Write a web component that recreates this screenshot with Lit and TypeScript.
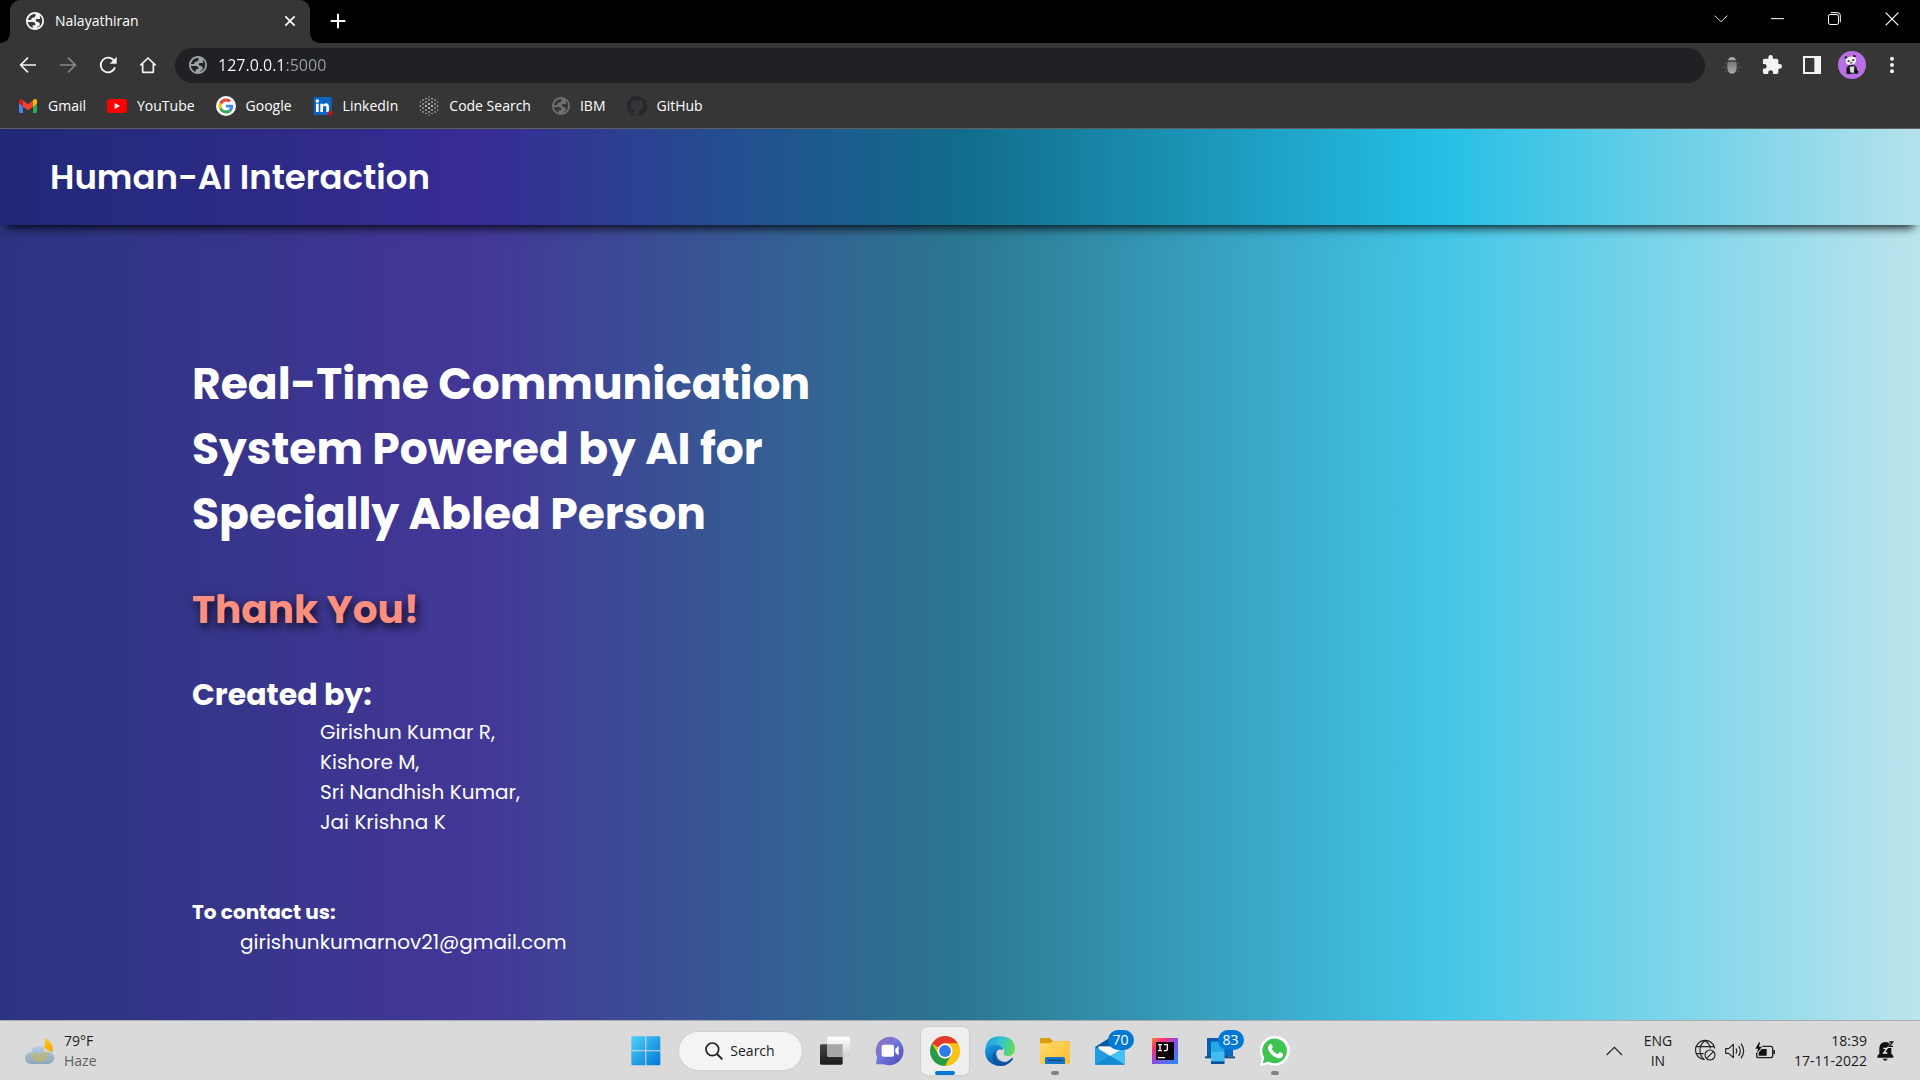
import { LitElement, html, svg, css, TemplateResult } from "lit";
import { customElement, property } from "lit/decorators.js";

/* Each icon is drawn at three units per pixel. */
const icon = (w: number, h: number, body: unknown) =>
  html`<svg width=${w} height=${h} viewBox="0 0 ${w * 3} ${h * 3}" aria-hidden="true">${body}</svg>`;

const globe = (color: string, size = 18) =>
  html`<svg width=${size} height=${size} viewBox="2 2 20 20" aria-hidden="true">
    <path fill=${color} d="M12 2C6.48 2 2 6.48 2 12s4.480 10 10 10 10-4.480 10-10S17.520 2 12 2zM4.100 13.200h5.100c1.600 0 2.800.6 3.200 2 .3 1-.4 1.500-1.600 1.500h-1.300v3.100C6.600 18.900 4.400 16.400 4.100 13.200zM14.500 19.600v-1.200c1.800-.2 2.900-1.300 2.900-2.800 0-1.600-1.200-2.700-3-2.900-1.300-.2-1.800-.9-1.500-1.800.2-.7.9-1.100 1.800-1.100h1.500c1.200 0 1.700-.7 1.400-1.800l-.3-1.700C19.400 7.700 20.200 10 20 12.600c-.3 3.300-2.500 6-5.500 7zM12.500 4.100v1.700c0 1.200-.8 2-2.200 2.200-1.600.2-2.500 1-2.500 2.100v.9H4.200C4.800 7 8.200 4 12.500 4.100z"/>
  </svg>`;

const icons = {
  close: icon(12, 12, svg`<path d="M4 4L32 32M32 4L4 32" stroke="#fff" stroke-width="5"/>`),
  plus: icon(16, 16, svg`<path d="M24 2V46M2 24H46" stroke="#fff" stroke-width="6"/>`),
  chevronDown: icon(14, 8, svg`<path d="M2 2L21 20L40 2" fill="none" stroke="#ddd" stroke-width="3"/>`),
  minimise: icon(13, 13, svg`<path d="M0 20H39" stroke="#fff" stroke-width="3"/>`),
  restore: icon(13, 13, svg`<rect x="1.500" y="7.500" width="30" height="30" rx="5" fill="none" stroke="#fff" stroke-width="3"/><path d="M8 2H29Q37 2 37 10V31" fill="none" stroke="#fff" stroke-width="3"/>`),
  closeWindow: icon(14, 14, svg`<path d="M2 2L40 40M40 2L2 40" stroke="#fff" stroke-width="3.500"/>`),
  back: icon(18, 18, svg`<path d="M51 27H6M27 5L5 27L27 49" fill="none" stroke="#f1f3f4" stroke-width="5"/>`),
  forward: icon(18, 18, svg`<path d="M3 27H48M27 5L49 27L27 49" fill="none" stroke="#868686" stroke-width="5"/>`),
  reload: icon(18, 18, svg`<path d="M45 14A22 22 0 1 0 48 34" fill="none" stroke="#f1f3f4" stroke-width="5.500"/><path d="M53 2V23H32Z" fill="#f1f3f4"/>`),
  home: icon(18, 18, svg`<path d="M4 28L27 6L50 28M11 24V49H43V24" fill="none" stroke="#f1f3f4" stroke-width="5" stroke-linejoin="round"/>`),
  bug: icon(18, 18, svg`<defs><linearGradient id="b" x2="0" y2="1"><stop stop-color="#777"/><stop offset="1" stop-color="#aaa"/></linearGradient></defs><path d="M15 13Q18 3 27 3T39 13Z" fill="#aaa"/><path d="M13 17H41V34Q41 53 27 53T13 34Z" fill="url(#b)"/><path d="M11 24L4 21M10 34H1M12 44L5 49M43 24L50 21M44 34H53M42 44L49 49" stroke="#555" stroke-width="3"/>`),
  puzzle: html`<svg width="20" height="20" viewBox="1 1 22 22" aria-hidden="true"><path fill="#f1f3f4" d="M20.500 11H19V7c0-1.100-.9-2-2-2h-4V3.500a2.500 2.500 0 0 0-5 0V5H4c-1.100 0-2 .9-2 2v3.800h1.500a2.700 2.700 0 0 1 0 5.400H2V20c0 1.100.9 2 2 2h3.800v-1.500a2.700 2.700 0 0 1 5.400 0V22H17c1.100 0 2-.9 2-2v-4h1.500a2.500 2.500 0 0 0 0-5z"/></svg>`,
  panel: icon(18, 18, svg`<rect x="3" y="3" width="48" height="48" fill="none" stroke="#f1f3f4" stroke-width="6"/><path d="M34 3H51V51H34Z" fill="#f1f3f4"/>`),
  avatar: icon(28, 28, svg`<circle cx="42" cy="42" r="42" fill="#b76fe3"/><ellipse cx="41" cy="55" rx="16" ry="14" fill="#1c1a20"/><path d="M35 47L49 46L48 65H37Z" fill="#ddd8e4"/><circle cx="31" cy="64" r="6" fill="#111"/><circle cx="55" cy="63" r="6" fill="#111"/><circle cx="24" cy="20" r="4" fill="#17151a"/><circle cx="49" cy="16" r="4" fill="#17151a"/><path d="M22 24Q34 13 51 18Q58 29 51 37Q38 45 26 39Z" fill="#f1eff3"/><path d="M29 32L35 29M42 28L49 26" stroke="#17151a" stroke-width="4"/><path d="M36 36L43 35" stroke="#17151a" stroke-width="3"/>`),
  menu: icon(6, 18, svg`<circle cx="9" cy="8" r="6" fill="#f1f3f4"/><circle cx="9" cy="27" r="6" fill="#f1f3f4"/><circle cx="9" cy="46" r="6" fill="#f1f3f4"/>`),
  gmail: icon(20, 20, svg`<path d="M3 21V47Q3 51 7 51H15V28Z" fill="#4285f4"/><path d="M57 21V47Q57 51 53 51H45V28Z" fill="#34a853"/><path d="M45 13L50 10Q57 7 57 16V22L45 32Z" fill="#fbbc04"/><path d="M3 22V16Q3 7 10 10L15 13V32Z" fill="#c5221f"/><path d="M15 13L30 25L45 13V32L30 43L15 32Z" fill="#ea4335"/>`),
  youtube: icon(20, 20, svg`<rect y="9" width="60" height="42" rx="10" fill="#f00"/><path d="M23 21L39 30L23 39Z" fill="#fff"/>`),
  google: html`<svg width="20" height="20" viewBox="-8 -8 64 64" aria-hidden="true"><circle cx="24" cy="24" r="32" fill="#fff"/><path fill="#EA4335" d="M24 9.500c3.540 0 6.710 1.220 9.210 3.600l6.850-6.850C35.900 2.380 30.470 0 24 0 14.620 0 6.510 5.380 2.560 13.220l7.980 6.190C12.430 13.720 17.740 9.500 24 9.500z"/><path fill="#4285F4" d="M46.980 24.550c0-1.570-.15-3.090-.38-4.550H24v9.020h12.940c-.58 2.960-2.260 5.480-4.780 7.180l7.730 6c4.510-4.180 7.090-10.360 7.090-17.650z"/><path fill="#FBBC05" d="M10.530 28.590c-.48-1.450-.76-2.990-.76-4.590s.27-3.140.76-4.590l-7.980-6.190C.92 16.460 0 20.120 0 24c0 3.880.92 7.540 2.560 10.780l7.970-6.190z"/><path fill="#34A853" d="M24 48c6.480 0 11.930-2.130 15.890-5.810l-7.730-6c-2.150 1.450-4.920 2.300-8.160 2.300-6.260 0-11.570-4.220-13.470-9.910l-7.980 6.190C6.510 42.620 14.620 48 24 48z"/></svg>`,
  linkedin: icon(20, 20, svg`<rect x="2" y="3" width="54" height="54" rx="4" fill="#0a66c2"/><rect x="9" y="23" width="8" height="25" fill="#fff"/><circle cx="13" cy="15" r="5" fill="#fff"/><path d="M22 23H30V27Q33 22 39 22Q48 22 48 34V48H40V35Q40 29 35 29T30 35V48H22Z" fill="#fff"/><circle cx="51" cy="52" r="7" fill="#cc1016"/>`),
  codeSearch: icon(20, 20, svg`${[
    [4, [18, 30, 42]], [12, [12, 24, 36, 48]], [21, [8, 18, 30, 42, 52]], [30, [3, 12, 24, 36, 48, 57]],
    [39, [8, 18, 30, 42, 52]], [48, [12, 24, 36, 48]], [56, [18, 30, 42]],
  ].map(([x, ys]) => (ys as number[]).map((y) => svg`<circle cx=${x as number} cy=${y} r=${3.1 - Math.hypot((x as number) - 30, y - 30) / 22} fill="#f0f0f0"/>`))}`),
  github: html`<svg width="20" height="20" viewBox="0 0 16 16" aria-hidden="true"><path fill="#24292f" d="M8 0C3.580 0 0 3.580 0 8c0 3.540 2.290 6.530 5.470 7.590.4.07.55-.17.55-.38 0-.19-.01-.82-.01-1.490-2.010.37-2.530-.49-2.690-.94-.09-.23-.48-.94-.82-1.130-.28-.15-.68-.52-.01-.53.63-.01 1.080.58 1.230.82.72 1.210 1.870.87 2.330.66.07-.52.28-.87.51-1.070-1.780-.2-3.640-.89-3.640-3.950 0-.87.31-1.590.82-2.150-.08-.2-.36-1.020.08-2.120 0 0 .67-.21 2.200.82.64-.18 1.320-.27 2-.27s1.360.09 2 .27c1.530-1.040 2.200-.82 2.200-.82.44 1.100.16 1.920.08 2.120.51.56.82 1.270.82 2.150 0 3.070-1.870 3.750-3.650 3.950.29.25.54.73.54 1.480 0 1.070-.01 1.930-.01 2.200 0 .21.15.46.55.38A8.010 8.010 0 0 0 16 8c0-4.420-3.580-8-8-8z"/></svg>`,

  weather: icon(30, 30, svg`<defs><linearGradient id="mo" x2="0" y2="1"><stop stop-color="#ffc928"/><stop offset="1" stop-color="#f5a800"/></linearGradient><linearGradient id="cl" x2="0" y2="1"><stop stop-color="#b9cde2"/><stop offset="1" stop-color="#8ba6bd"/></linearGradient></defs><path d="M59 6Q89 15 87 48Q72 46 60 34Q67 20 59 6Z" fill="url(#mo)"/><path d="M20 84A18 18 0 0 1 22 48Q25 30 43 30T62 47H72A18.500 18.500 0 0 1 72 84Z" fill="url(#cl)"/><path d="M17 58Q30 44 47 55Q60 42 75 52Q72 78 47 79Q26 78 17 58Z" fill="#c5b568" opacity=".65"/>`),
  start: icon(30, 30, svg`<defs><linearGradient id="w" x2="1" y2="1"><stop stop-color="#4ed0fc"/><stop offset="1" stop-color="#0078d4"/></linearGradient></defs><path d="M4 1H43V43H1V4Q1 1 4 1ZM46 1H85Q88 1 88 4V43H46ZM1 46H43V88H4Q1 88 1 85ZM46 46H88V85Q88 88 85 88H46Z" fill="url(#w)"/>`),
  search: icon(18, 18, svg`<circle cx="22" cy="22" r="19" fill="none" stroke="#222" stroke-width="5"/><path d="M36 36L52 52" stroke="#222" stroke-width="6"/>`),
  taskView: icon(30, 30, svg`<defs><linearGradient id="t" x2="0" y2="1"><stop stop-color="#444"/><stop offset="1" stop-color="#1c1c1c"/></linearGradient><linearGradient id="tw" x2="0" y2="1"><stop stop-color="#fff"/><stop offset="1" stop-color="#cfcfcf"/></linearGradient></defs><rect y="25" width="68" height="61" rx="4" fill="url(#t)"/><rect x="22" y="2" width="68" height="61" rx="4" fill="url(#tw)"/><path d="M22 25H68V63H26Q22 63 22 59Z" fill="#a7a7a7"/>`),
  chat: icon(30, 30, svg`<defs><linearGradient id="c" x2="1" y2="1"><stop stop-color="#9a72b5"/><stop offset=".45" stop-color="#7078d8"/><stop offset="1" stop-color="#4c45b8"/></linearGradient></defs><path d="M45 2A43 43 0 1 1 27 85H3L6 63A43 43 0 0 1 45 2Z" fill="url(#c)"/><rect x="20" y="26" width="37" height="36" rx="6" fill="#fff"/><path d="M61 38L71 30V58L61 50Z" fill="#fff"/>`),
  chrome: html`<svg width="30" height="30" viewBox="0 0 48 48" aria-hidden="true"><circle cx="24" cy="24" r="24" fill="#fbc116"/><path fill="#e33b2e" d="M3.220 12A24 24 0 0 1 44.780 12H24A12 12 0 0 0 13.600 18z"/><path fill="#269b4a" d="M3.220 12A24 24 0 0 0 24 48L34.400 30A12 12 0 0 1 13.600 30z"/><path fill="#e33b2e" d="M3.220 12L13.600 18L20 14z"/><path fill="#fbc116" d="M44.780 12H24L34.400 30L24 48A24 24 0 0 0 44.780 12z"/><circle cx="24" cy="24" r="12" fill="#fff"/><circle cx="24" cy="24" r="9.500" fill="#2f7ae9"/></svg>`,
  edge: icon(30, 30, svg`<defs><linearGradient id="e" y1=".3" x2="1" y2=".5"><stop stop-color="#1fa0dc"/><stop offset=".5" stop-color="#35c3d3"/><stop offset="1" stop-color="#62de55"/></linearGradient><linearGradient id="e2" x2=".4" y2="1"><stop stop-color="#1b9de2"/><stop offset="1" stop-color="#0b5cae"/></linearGradient></defs><path d="M1 40Q5 1 45 1Q87 1 90 38Q88 60 68 60Q52 60 57 49Q61 40 50 35Q26 24 1 47Z" fill="url(#e)"/><path d="M0 48Q3 26 28 26Q49 26 55 42Q34 36 34 55Q38 80 66 78Q55 92 36 89Q2 82 0 48Z" fill="url(#e2)"/><path d="M35 43Q23 60 36 75Q54 91 80 67Q84 64 85 68Q69 91 45 90Q20 85 23 61Q25 49 35 43Z" fill="#10509a"/>`),
  explorer: icon(30, 30, svg`<defs><linearGradient id="f" x2="1" y2="1"><stop stop-color="#ffdb6b"/><stop offset="1" stop-color="#fbbd2e"/></linearGradient></defs><path d="M0 9Q0 6 3 6H29L39 15H87Q90 15 90 19V40H0Z" fill="#dd9d0a"/><path d="M0 22H30L39 16H90V83H0Z" fill="url(#f)"/><path d="M15 84V68Q15 63 20 63H70Q75 63 75 68V84Z" fill="#1475c4"/><path d="M24 73H67" stroke="#0b4685" stroke-width="4"/>`),
  mail: icon(30, 30, svg`<path d="M0 33L44 5L90 33V50H0Z" fill="#09589f"/><path d="M10 31H80V60H10Z" fill="#f4f4f4"/><path d="M0 32L90 86H0Z" fill="#1f9be0"/><path d="M90 33V86L46 59Z" fill="#41c4f3"/><path d="M0 86L46 59L90 86Z" fill="#1489d2"/>`),
  intellij: icon(26, 26, svg`<defs><linearGradient id="ij" x2="1" y2="1"><stop stop-color="#f58a2d"/><stop offset=".25" stop-color="#fb2a7b"/><stop offset=".5" stop-color="#8d4be5"/><stop offset="1" stop-color="#1792fb"/></linearGradient></defs><rect width="78" height="78" fill="url(#ij)"/><rect x="12" y="12" width="54" height="54" fill="#0c0008"/><path d="M18 20H30M24 20V38M18 38H30M36 20H46V33Q46 39 36 38M18 59H39" fill="none" stroke="#fff" stroke-width="4"/>`),
  phone: icon(30, 30, svg`<path d="M6 6H70V65H6Z" fill="#0b5db0"/><path d="M36 12H84V61H36Z" fill="#0b69bf"/><path d="M0 61H90V67H0Z" fill="#174f85"/><rect x="18" y="17" width="40" height="67" fill="#23a8e6"/><path d="M18 47H58V84H18Z" fill="#43bdf0"/><path d="M18 76H58V84H18Z" fill="#0a5199"/>`),
  whatsapp: icon(30, 30, svg`<path d="M0 90L6 67A45 45 0 1 1 24 84Z" fill="#fff"/><path d="M8 82L13 65A37 37 0 1 1 26 77Z" fill="#3fc351"/><path d="M32 24Q35 23 38 31Q39 34 35 39Q42 51 53 55L58 49Q60 47 64 50Q70 53 69 56Q68 67 56 67Q38 64 27 46Q19 30 32 24Z" fill="#fff"/>`),
  chevronUp: icon(17, 10, svg`<path d="M2 27L25 4L48 27" fill="none" stroke="#222" stroke-width="3.500"/>`),
  network: icon(21, 21, svg`<g fill="none" stroke="#222" stroke-width="3.500"><path d="M59 25A29 29 0 1 0 29 59M30 2Q15 12 15 31T28 59M30 2Q44 10 46 25M4 20H56M4 41H26"/><circle cx="45" cy="45" r="15"/><path d="M35 55L55 35"/></g>`),
  sound: icon(21, 18, svg`<g fill="none" stroke="#222" stroke-width="3.500" stroke-linejoin="round"><path d="M2 20V34H11L25 47V7L11 20Z"/><path d="M33 19Q38 27 33 35M41 12Q51 27 41 42"/><path d="M48 5Q64 27 48 49" /></g>`),
  battery: icon(21, 18, svg`<path d="M22 13H47Q53 13 53 19V41Q53 47 47 47H11Q5 47 5 41V32" fill="none" stroke="#222" stroke-width="4"/><path d="M55 24H60V37H55Z" fill="#222"/><path d="M13 29L20 21H35V41H11V34Z" fill="#111"/><path d="M12 1L1 20H9L6 34L21 14H12L15 1Z" fill="#111"/>`),
  bell: icon(18, 21, svg`<path d="M1 53V47L7 41V24Q8 7 25 6Q37 7 43 17V41L49 47V53Z" fill="#111"/><path d="M17 56H32Q30 62 25 62T17 56Z" fill="#111"/><path d="M36 6H48L37 20H49" fill="none" stroke="#dadada" stroke-width="8"/><path d="M19 25H30L20 39H31" fill="none" stroke="#f0f0f0" stroke-width="4"/><path d="M37 6H47L37 19H48" fill="none" stroke="#111" stroke-width="4"/>`),
};

const resets = css`
  * { box-sizing: border-box; }
  button { border: 0; padding: 0; margin: 0; background: none; font: inherit; color: inherit; display: flex; align-items: center; justify-content: center; }
  a { color: inherit; text-decoration: none; }
  svg { display: block; flex: none; overflow: visible; }
`;

@customElement("browser-chrome")
class BrowserChrome extends LitElement {
  static styles = [resets, css`
    :host { display: block; background: #363636; color: #fff; font: 14px/20px "Segoe UI", "Open Sans", sans-serif; border-bottom: 1px solid #62605f; }
    .tabs { display: flex; background: #000; height: 43px; padding-left: 10px; }
    .tab { position: relative; display: flex; align-items: center; width: 300px; padding: 0 14px 2px 16px; background: #363636; border-radius: 10px 10px 0 0; gap: 11px; }
    .tab::before, .tab::after { content: ""; position: absolute; bottom: 0; width: 10px; height: 10px; }
    .tab::before { left: -10px; background: radial-gradient(circle at 0 0, transparent 10px, #363636 10px); }
    .tab::after { right: -10px; background: radial-gradient(circle at 100% 0, transparent 10px, #363636 10px); }
    .tab-title { flex: 1; }
    .new-tab { width: 55px; height: 42px; }
    .window-controls { display: flex; margin-left: auto; }
    .window-controls button { width: 57px; height: 37px; }
    .toolbar { display: flex; align-items: center; height: 44px; padding: 0 8px; }
    .tool { width: 40px; height: 36px; }
    .address { display: flex; align-items: center; flex: 1; height: 35px; margin: 0 7px; padding: 0 14px; gap: 11px; border-radius: 18px; background: #202124; }
    .address input { flex: 1; min-width: 0; border: 0; padding: 0; outline: 0; font: 16px/24px "Segoe UI", "Open Sans", sans-serif; color: transparent; background: linear-gradient(to right, #fff 67px, #9aa0a6 67px); -webkit-background-clip: text; background-clip: text; }
    .bookmarks { display: flex; align-items: center; height: 41px; padding: 0 18px 3px; gap: 21px; }
    .bookmark { display: flex; align-items: center; gap: 10px; }
  `];

  private tool(label: string, glyph: TemplateResult) {
    return html`<button class="tool" aria-label=${label}>${glyph}</button>`;
  }

  render() {
    const bookmarks: [string, TemplateResult][] = [
      ["Gmail", icons.gmail], ["YouTube", icons.youtube], ["Google", icons.google], ["LinkedIn", icons.linkedin],
      ["Code Search", icons.codeSearch], ["IBM", globe("#6b6f73")], ["GitHub", icons.github],
    ];
    return html`
      <div class="tabs">
        <div class="tab">${globe("#f1f3f4")}<span class="tab-title">Nalayathiran</span><button aria-label="Close tab">${icons.close}</button></div>
        <button class="new-tab" aria-label="New tab">${icons.plus}</button>
        <div class="window-controls">
          <button aria-label="Search tabs">${icons.chevronDown}</button>
          <button aria-label="Minimise">${icons.minimise}</button>
          <button aria-label="Restore">${icons.restore}</button>
          <button aria-label="Close">${icons.closeWindow}</button>
        </div>
      </div>
      <div class="toolbar">
        ${this.tool("Back", icons.back)}${this.tool("Forward", icons.forward)}${this.tool("Reload", icons.reload)}${this.tool("Home", icons.home)}
        <label class="address">${globe("#9aa0a6")}<input type="text" aria-label="Address" .value=${"127.0.0.1:5000"} /></label>
        ${this.tool("Debugger extension", icons.bug)}${this.tool("Extensions", icons.puzzle)}${this.tool("Side panel", icons.panel)}${this.tool("Profile", icons.avatar)}${this.tool("Menu", icons.menu)}
      </div>
      <nav class="bookmarks">
        ${bookmarks.map(([name, glyph]) => html`<a class="bookmark" href="#">${glyph}${name}</a>`)}
      </nav>`;
  }
}

@customElement("project-page")
class ProjectPage extends LitElement {
  static styles = [resets, css`
    :host { display: flex; flex-direction: column; flex: 1; color: #fff; font: 20px/30px Poppins, Inter, sans-serif;
      background: linear-gradient(to right, #2c3480, #433797 25%, #2b7791 50%, #43c6e7 75%, #bce5ed); }
    header { padding: 24px 50px; background: linear-gradient(to right, #212977, #372c94 25%, #126c8b 50%, #25bfe5 75%, #b5e2eb); box-shadow: 0 8px 10px -6px #000; }
    .brand { font-size: 34px; line-height: 48px; font-weight: 600; margin: 0; }
    main { padding: 126px 10% 60px; }
    h1, h2, h3, p, ul { margin: 0; padding: 0; list-style: none; }
    h1 { font-size: 44px; line-height: 65px; max-width: 704px; }
    .thanks { margin-top: 34px; font-size: 39px; line-height: 60px; color: #fa8f80; text-shadow: 2px 4px 10px rgba(0, 0, 0, 0.8); }
    .created { margin-top: 32px; font-size: 30px; line-height: 45px; }
    .names { padding-left: 128px; }
    .contact { margin-top: 60px; font-size: 20px; line-height: 30px; }
    .mail { padding-left: 48px; }
  `];

  render() {
    const names = ["Girishun Kumar R,", "Kishore M,", "Sri Nandhish Kumar,", "Jai Krishna K"];
    return html`
      <header><p class="brand">Human-AI Interaction</p></header>
      <main>
        <h1>Real-Time Communication System Powered by AI for Specially Abled Person</h1>
        <h2 class="thanks">Thank You!</h2>
        <h2 class="created">Created by:</h2>
        <ul class="names">${names.map((n) => html`<li>${n}</li>`)}</ul>
        <h3 class="contact">To contact us:</h3>
        <p class="mail"><a href="mailto:girishunkumarnov21@gmail.com">girishunkumarnov21@gmail.com</a></p>
      </main>`;
  }
}

@customElement("task-button")
class TaskButton extends LitElement {
  @property() label = "";
  @property() badge = "";
  @property() mark = "";
  @property({ attribute: false }) glyph?: TemplateResult;

  static styles = [resets, css`
    button { position: relative; width: 48px; height: 48px; border-radius: 6px; }
    .active { background: #eeeeee; box-shadow: 0 0 2px #b5b5b5; }
    .badge { position: absolute; left: 22px; top: 3px; min-width: 26px; height: 20px; padding: 0 5px; border-radius: 10px; background: #0078d4; color: #fff; font: 14px/20px "Segoe UI", "Open Sans", sans-serif; }
    .mark { position: absolute; bottom: 0; width: 8px; height: 4px; border-radius: 2px; background: #828282; }
    .active .mark { width: 20px; background: #0078d4; }
  `];

  render() {
    return html`<button class=${this.mark === "active" ? "active" : "idle"} aria-label=${this.label}>
      ${this.glyph}
      ${this.badge ? html`<span class="badge">${this.badge}</span>` : ""}
      ${this.mark ? html`<span class="mark"></span>` : ""}
    </button>`;
  }
}

@customElement("task-bar")
class TaskBar extends LitElement {
  static styles = [resets, css`
    :host { display: grid; grid-template-columns: 1fr auto 1fr; align-items: center; height: 59px; background: #dadada; border-top: 1px solid #a9adb2; color: #1b1b1b; font: 14px/20px "Segoe UI", "Open Sans", sans-serif; }
    .weather { justify-self: start; margin-left: 24px; gap: 10px; text-align: left; }
    .haze { color: #606060; }
    .apps { display: flex; align-items: center; gap: 7px; }
    .search { width: 123px; height: 38px; margin: 0 2px; gap: 7px; border-radius: 19px; background: #f4f4f4; box-shadow: 0 0 2px #bbb; }
    .tray { display: flex; align-items: center; justify-self: end; padding-right: 25px; }
    .language { margin-left: 19px; width: 32px; }
    .status { margin-left: 21px; gap: 9px; }
    .clock { margin-left: 18px; gap: 10px; text-align: right; }
  `];

  render() {
    const apps: [string, TemplateResult, string, string][] = [
      ["Task view", icons.taskView, "", ""], ["Chat", icons.chat, "", ""], ["Chrome", icons.chrome, "", "active"],
      ["Edge", icons.edge, "", ""], ["File Explorer", icons.explorer, "", "open"], ["Mail", icons.mail, "70", ""],
      ["IntelliJ IDEA", icons.intellij, "", ""], ["Phone Link", icons.phone, "83", ""], ["WhatsApp", icons.whatsapp, "", "open"],
    ];
    return html`
      <button class="weather">${icons.weather}<span>79°F<br /><span class="haze">Haze</span></span></button>
      <nav class="apps">
        <task-button label="Start" .glyph=${icons.start}></task-button>
        <button class="search">${icons.search}Search</button>
        ${apps.map(([label, glyph, badge, mark]) => html`<task-button .label=${label} .glyph=${glyph} .badge=${badge} .mark=${mark}></task-button>`)}
      </nav>
      <div class="tray">
        <button aria-label="Hidden icons">${icons.chevronUp}</button>
        <button class="language">ENG<br />IN</button>
        <button class="status" aria-label="Network, sound, battery">${icons.network}${icons.sound}${icons.battery}</button>
        <button class="clock"><span>18:39<br />17-11-2022</span>${icons.bell}</button>
      </div>`;
  }
}

@customElement("app-root")
class AppRoot extends LitElement {
  static styles = css`
    :host { display: flex; flex-direction: column; min-height: 100vh; }
  `;

  render() {
    return html`<browser-chrome></browser-chrome><project-page></project-page><task-bar></task-bar>`;
  }
}
